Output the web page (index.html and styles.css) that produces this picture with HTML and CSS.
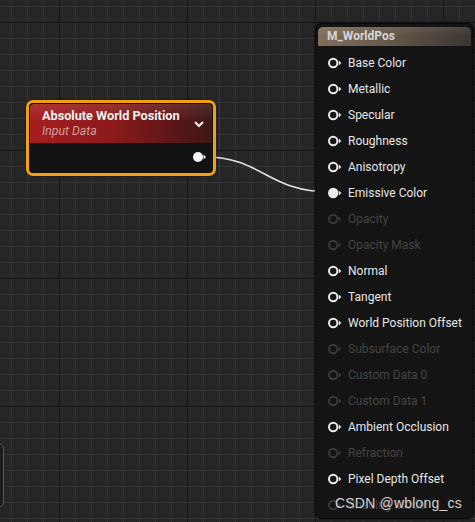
FILE: index.html
```html
<!DOCTYPE html>
<html lang="en">
<head>
    <meta charset="UTF-8">
    <title>Material Graph</title>
    <link rel="stylesheet" href="styles.css">
</head>
<body>
    <div class="graph">
        <svg class="wires" width="475" height="522">
            <path d="M 205 157 C 262 157, 268 192, 330 192" />
        </svg>

        <div class="stub"></div>

        <div class="node expr">
            <div class="expr-head">
                <div class="expr-titles">
                    <div class="expr-title">Absolute World Position</div>
                    <div class="expr-sub">Input Data</div>
                </div>
                <svg class="chevron" width="10" height="7" viewBox="0 0 10 7">
                    <path d="M1 1 L5 5 L9 1" />
                </svg>
            </div>
            <div class="expr-body">
                <svg class="pin" width="14" height="12" viewBox="0 0 14 12">
                    <circle cx="5" cy="6" r="5" class="fill" />
                    <polygon points="10.5,3.5 13,6 10.5,8.5" class="fill" />
                </svg>
            </div>
        </div>

        <div class="node material">
            <div class="mat-head">M_WorldPos</div>
            <div class="pins">
                <div class="row"><svg class="pin"><use href="#pin-open"/></svg>Base Color</div>
                <div class="row"><svg class="pin"><use href="#pin-open"/></svg>Metallic</div>
                <div class="row"><svg class="pin"><use href="#pin-open"/></svg>Specular</div>
                <div class="row"><svg class="pin"><use href="#pin-open"/></svg>Roughness</div>
                <div class="row"><svg class="pin"><use href="#pin-open"/></svg>Anisotropy</div>
                <div class="row"><svg class="pin"><use href="#pin-full"/></svg>Emissive Color</div>
                <div class="row dim"><svg class="pin"><use href="#pin-open"/></svg>Opacity</div>
                <div class="row dim"><svg class="pin"><use href="#pin-open"/></svg>Opacity Mask</div>
                <div class="row"><svg class="pin"><use href="#pin-open"/></svg>Normal</div>
                <div class="row"><svg class="pin"><use href="#pin-open"/></svg>Tangent</div>
                <div class="row"><svg class="pin"><use href="#pin-open"/></svg>World Position Offset</div>
                <div class="row dim"><svg class="pin"><use href="#pin-open"/></svg>Subsurface Color</div>
                <div class="row dim"><svg class="pin"><use href="#pin-open"/></svg>Custom Data 0</div>
                <div class="row dim"><svg class="pin"><use href="#pin-open"/></svg>Custom Data 1</div>
                <div class="row"><svg class="pin"><use href="#pin-open"/></svg>Ambient Occlusion</div>
                <div class="row dim"><svg class="pin"><use href="#pin-open"/></svg>Refraction</div>
                <div class="row"><svg class="pin"><use href="#pin-open"/></svg>Pixel Depth Offset</div>
                <div class="row dim"><svg class="pin"><use href="#pin-open"/></svg>Shading Model</div>
            </div>
        </div>

        <div class="watermark">CSDN @wblong_cs</div>
    </div>

    <svg width="0" height="0" style="position:absolute">
        <defs>
            <symbol id="pin-open" viewBox="0 0 14 12">
                <circle cx="5.2" cy="6" r="4.2" fill="none" stroke="currentColor" stroke-width="2" />
                <polygon points="10.8,3.5 13.3,6 10.8,8.5" fill="currentColor" />
            </symbol>
            <symbol id="pin-full" viewBox="0 0 14 12">
                <circle cx="5.2" cy="6" r="5.2" fill="currentColor" />
                <polygon points="10.8,3.5 13.3,6 10.8,8.5" fill="currentColor" />
            </symbol>
        </defs>
    </svg>
</body>
</html>
```

FILE: styles.css
```css
body {
    margin: 0;
    background: #262626;
    font-family: Roboto, "Liberation Sans", sans-serif;
    overflow: hidden;
}

.graph {
    position: relative;
    width: 475px;
    height: 522px;
    overflow: hidden;
    background-color: #262626;
    background-image:
        linear-gradient(to right, #151515 1px, transparent 1px),
        linear-gradient(to bottom, #151515 1px, transparent 1px),
        linear-gradient(to right, #353535 1px, transparent 1px),
        linear-gradient(to bottom, #353535 1px, transparent 1px);
    background-size: 128px 128px, 128px 128px, 16px 16px, 16px 16px;
    background-position: 59px 0, 0 22px, 11px 0, 0 6px;
}

.wires {
    position: absolute;
    left: 0;
    top: 0;
    z-index: 1;
}

.wires path {
    fill: none;
    stroke: #e2e2e2;
    stroke-width: 1.6;
}

.node {
    position: absolute;
    box-sizing: border-box;
    z-index: 2;
}

/* expression node */
.expr {
    left: 26px;
    top: 100px;
    width: 190px;
    height: 76px;
    border: 3px solid #f0a010;
    border-radius: 7px;
    background: #111211;
    padding: 1px;
    box-shadow: 0 0 2px rgba(0,0,0,0.6);
}

.expr-head {
    display: flex;
    align-items: center;
    justify-content: space-between;
    height: 39px;
    padding: 0 8px 0 12px;
    border-radius: 4px 4px 0 0;
    background:
        linear-gradient(to bottom, rgba(255,255,255,0.10), rgba(255,255,255,0) 45%),
        linear-gradient(to right, #a51d1e 0%, #8c1a1b 45%, #5a1617 80%, #3c1718 100%);
}

.expr-title {
    color: #f0f0f0;
    font-weight: bold;
    font-size: 12.7px;
    line-height: 16px;
}

.expr-sub {
    color: #d29c9a;
    font-style: italic;
    font-size: 12.3px;
    line-height: 15px;
}

.chevron {
    margin-top: 2px;
}

.chevron path {
    fill: none;
    stroke: #f2f2f2;
    stroke-width: 2;
}

.expr-body {
    display: flex;
    justify-content: flex-end;
    align-items: center;
    height: 28px;
    padding-right: 5px;
}

.pin .fill {
    fill: #f4f4f4;
}

/* material result node */
.material {
    left: 315px;
    top: 23px;
    width: 159px;
    height: 496px;
    background: #141414;
    border: 1px solid #0a0a0a;
    border-radius: 7px;
    padding: 3px 2px 0 2px;
    box-shadow: 0 0 3px rgba(0,0,0,0.7);
}

.mat-head {
    height: 19px;
    line-height: 19px;
    padding-left: 9px;
    color: #d6d6d6;
    font-weight: bold;
    font-size: 12px;
    border-radius: 5px 5px 0 0;
    background:
        linear-gradient(to bottom, rgba(255,255,255,0.08), rgba(255,255,255,0) 50%),
        linear-gradient(to right, #806e5a 0%, #6a5c4d 40%, #4a423b 80%, #3a3632 100%);
}

.pins {
    display: flex;
    flex-direction: column;
    padding-top: 4px;
}

.row {
    display: flex;
    align-items: center;
    gap: 6px;
    height: 26px;
    padding-left: 10px;
    color: #e6e6e6;
    font-size: 12px;
}

.row .pin {
    width: 14px;
    height: 12px;
    color: #ececec;
    flex-shrink: 0;
}

.row.dim {
    color: #444444;
}

.row.dim .pin {
    color: #3a3a3a;
}

/* partly visible node at the left edge */
.stub {
    position: absolute;
    left: -20px;
    top: 443px;
    width: 24px;
    height: 65px;
    box-sizing: border-box;
    background: #1c1c1c;
    border: 1px solid #5a5a5a;
    border-radius: 6px;
}

.watermark {
    position: absolute;
    left: 335px;
    top: 495px;
    z-index: 3;
    color: #d2d2d2;
    font-family: "Liberation Sans", Arial, sans-serif;
    font-size: 14px;
    letter-spacing: 0.2px;
}
```
